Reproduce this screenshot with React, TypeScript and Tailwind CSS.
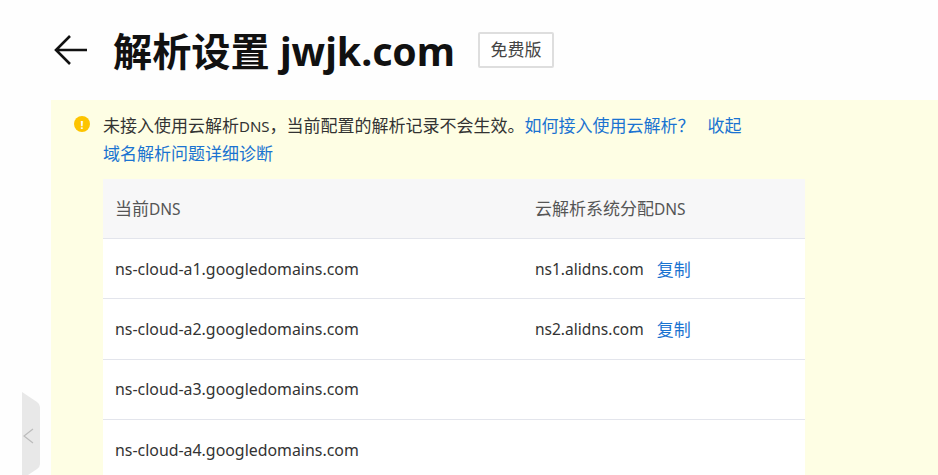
import React from 'react';

const FONT = "font-['Noto_Sans','Noto_Sans_CJK_SC',sans-serif]";

const rows = [
    { current: 'ns-cloud-a1.googledomains.com', assigned: 'ns1.alidns.com' },
    { current: 'ns-cloud-a2.googledomains.com', assigned: 'ns2.alidns.com' },
    { current: 'ns-cloud-a3.googledomains.com', assigned: '' },
    { current: 'ns-cloud-a4.googledomains.com', assigned: '' },
];

const App: React.FC = () => {
    return (
        <div className={`${FONT} relative h-[475px] w-[938px] overflow-hidden bg-[#fefefe] text-[#333333]`}>
            {/* title bar */}
            <div className="flex h-[100px] items-center pl-[53px]">
                <svg width="36" height="36" viewBox="0 0 36 36" fill="none" stroke="#111111" strokeWidth="2.6">
                    <path d="M34 18H3M17 4 3 18l14 14" />
                </svg>
                <h1 className="ml-[24px] pt-[2px] text-[39.2px] leading-none font-bold text-[#111111]">解析设置 jwjk.com</h1>
                <span className="ml-[23px] flex h-[36px] w-[76px] items-center justify-center rounded-[2px] border-2 border-[#dedede] bg-white text-[17px] text-[#444444]">免费版</span>
            </div>

            {/* warning panel */}
            <div className="ml-[51px] h-[375px] bg-[#fefee4] pt-[12px] pl-[23px]">
                <div className="flex items-start">
                    <span className="mt-[4px] flex h-[16px] w-[16px] items-center justify-center rounded-full bg-[#fdc400] text-[11px] leading-none font-bold text-white">!</span>
                    <div className="ml-[13px] text-[17px] leading-[28px] whitespace-nowrap">
                        <p>
                            未接入使用云解析<span className="text-[15px]">DNS</span>{'\uFF0C'}当前配置的解析记录不会生效。<span className="text-[#1a73d1]">如何接入使用云解析{'\uFF1F'}</span>
                            <span className="ml-[13px] text-[#1a73d1]">收起</span>
                        </p>
                        <p className="text-[#1a73d1]">域名解析问题详细诊断</p>
                    </div>
                </div>

                {/* dns table */}
                <div className="mt-[11px] ml-[29px] w-[702px] bg-white text-[15.5px]">
                    <div className="flex h-[60px] items-center border-b border-[#e3e5ec] bg-[#f7f7f8] text-[17px] text-[#555555]">
                        <div className="w-[420px] pl-[12px]">当前<span className="text-[15.5px]">DNS</span></div>
                        <div className="pl-[12px]">云解析系统分配<span className="text-[15.5px]">DNS</span></div>
                    </div>
                    {rows.map((row) => (
                        <div key={row.current} className="flex h-[60.3px] items-center border-b border-[#e3e5ec] pt-[2px]">
                            <div className="w-[420px] pl-[12px] text-[15.9px]">{row.current}</div>
                            {row.assigned && (
                                <div className="flex items-center pl-[12px]">
                                    <span>{row.assigned}</span>
                                    <span className="ml-[13px] text-[17px] text-[#1a73d1]">复制</span>
                                </div>
                            )}
                        </div>
                    ))}
                </div>
            </div>

            {/* sidebar toggle */}
            <div className="absolute top-[392px] left-[22px] h-[90px] w-[18px]">
                <svg width="18" height="90" viewBox="0 0 18 90">
                    <path d="M0 0 15 10Q18 12 18 15V72Q18 75 15 77L0 87Z" fill="#e8e8e8" />
                    <path d="M11 37 2 44l9 7" fill="none" stroke="#bcbcbc" strokeWidth="1.2" />
                </svg>
            </div>
        </div>
    );
};

export default App;
